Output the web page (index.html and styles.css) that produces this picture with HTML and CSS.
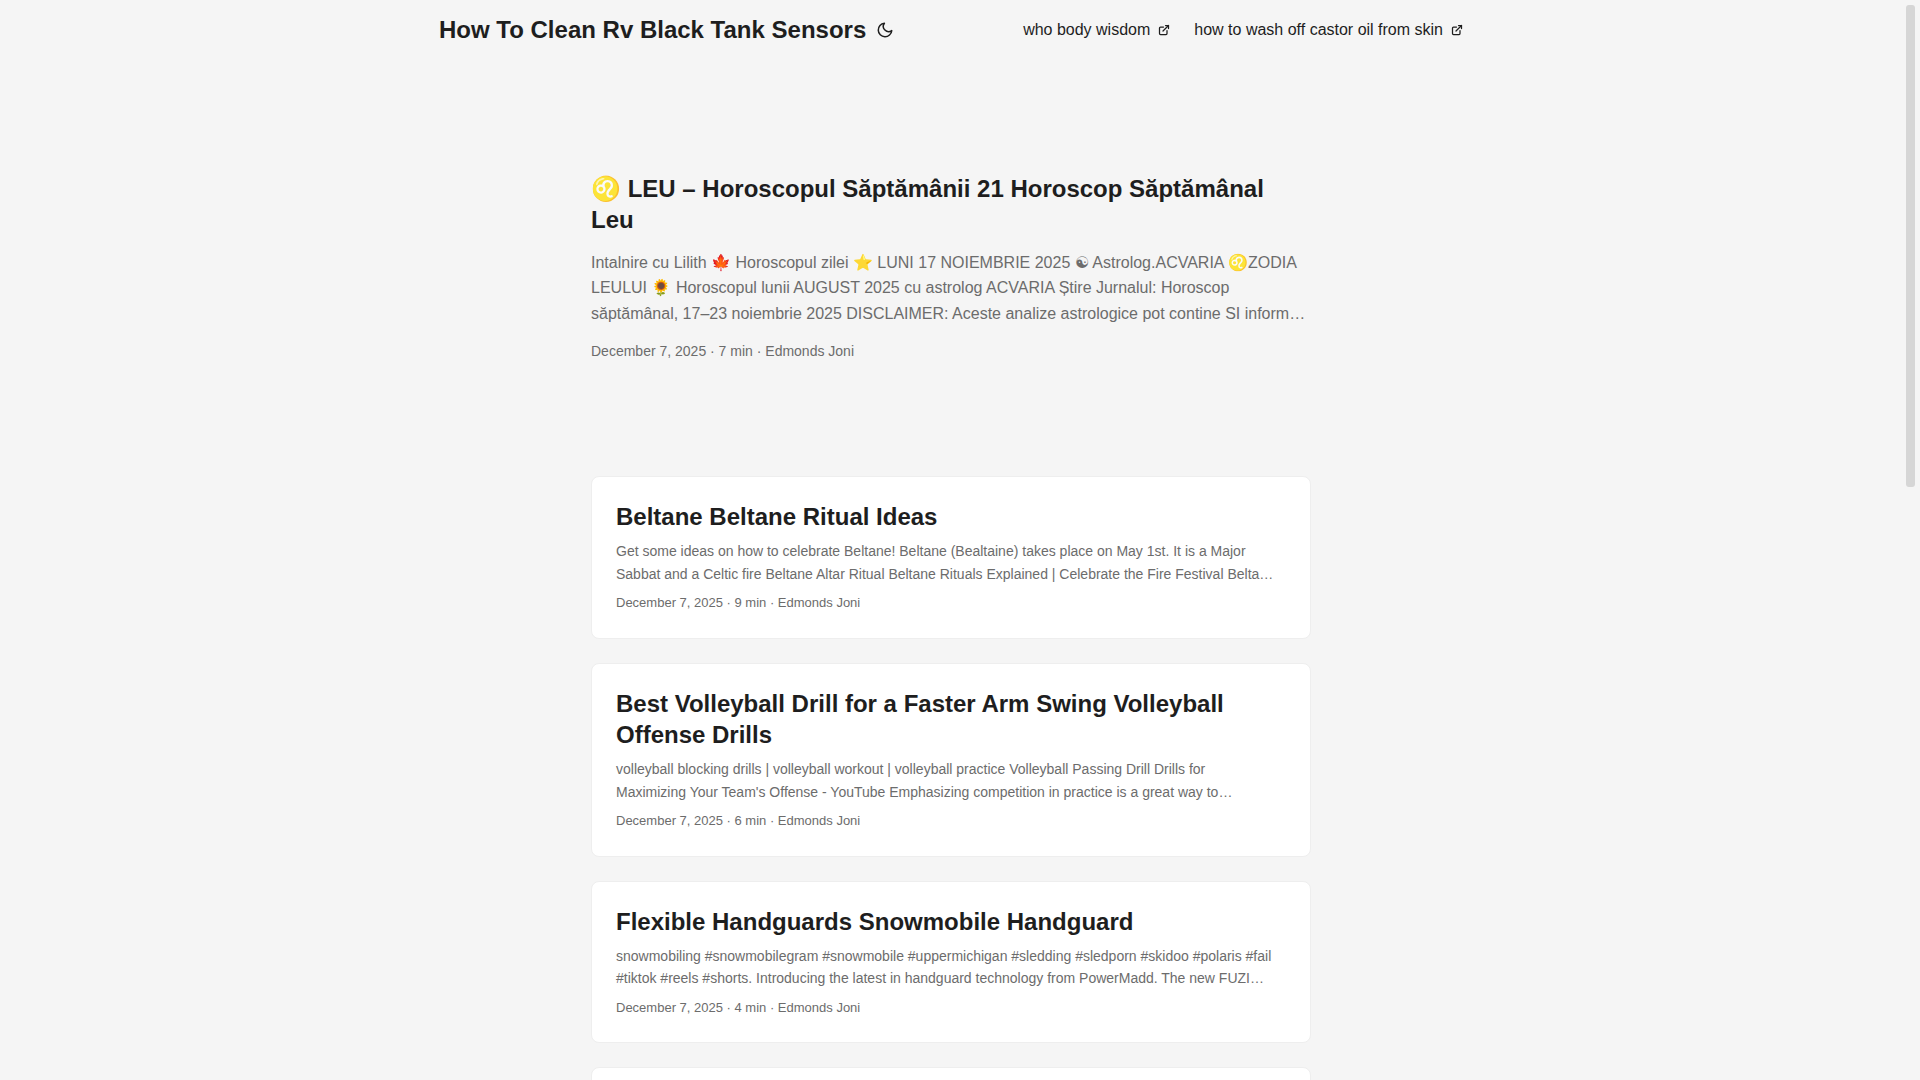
FILE: index.html
```html
<!DOCTYPE html>
<html lang="en">
<head>
  <meta charset="UTF-8" />
  <meta name="viewport" content="width=device-width, initial-scale=1" />
  <title>How To Clean Rv Black Tank Sensors</title>
  <link rel="stylesheet" href="styles.css">
</head>
<body>
  <div class="page">
    <header class="header">
      <nav class="nav">
        <div class="logo">
          <a href="#">How To Clean Rv Black Tank Sensors</a>
          <button class="theme-toggle" type="button" aria-label="Toggle theme">
            <svg width="18" height="18" viewBox="0 0 24 24" fill="none" stroke="currentColor" stroke-width="2" stroke-linecap="round" stroke-linejoin="round">
              <path d="M21 12.79A9 9 0 1 1 11.21 3 7 7 0 0 0 21 12.79z"></path>
            </svg>
          </button>
        </div>
        <ul class="menu">
          <li>
            <a href="#">who body wisdom
              <svg width="12" height="12" viewBox="0 0 24 24" fill="none" stroke="currentColor" stroke-width="2.5" stroke-linecap="round" stroke-linejoin="round">
                <path d="M18 13v6a2 2 0 0 1-2 2H5a2 2 0 0 1-2-2V8a2 2 0 0 1 2-2h6"></path>
                <path d="M15 3h6v6"></path>
                <path d="M10 14L21 3"></path>
              </svg>
            </a>
          </li>
          <li>
            <a href="#">how to wash off castor oil from skin
              <svg width="12" height="12" viewBox="0 0 24 24" fill="none" stroke="currentColor" stroke-width="2.5" stroke-linecap="round" stroke-linejoin="round">
                <path d="M18 13v6a2 2 0 0 1-2 2H5a2 2 0 0 1-2-2V8a2 2 0 0 1 2-2h6"></path>
                <path d="M15 3h6v6"></path>
                <path d="M10 14L21 3"></path>
              </svg>
            </a>
          </li>
        </ul>
      </nav>
    </header>

    <main class="main">
      <article class="first-entry">
        <h2><a href="#">♌ LEU – Horoscopul Săptămânii 21 Horoscop Săptămânal Leu</a></h2>
        <p class="entry-content">Intalnire cu Lilith 🍁 Horoscopul zilei ⭐ LUNI 17 NOIEMBRIE 2025 ☯ Astrolog.ACVARIA ♌ZODIA LEULUI 🌻 Horoscopul lunii AUGUST 2025 cu astrolog ACVARIA Știre Jurnalul: Horoscop săptămânal, 17–23 noiembrie 2025 DISCLAIMER: Aceste analize astrologice pot contine SI inform…</p>
        <footer class="entry-footer">December 7, 2025 · 7 min · Edmonds Joni</footer>
      </article>

      <article class="post-entry">
        <h2><a href="#">Beltane Beltane Ritual Ideas</a></h2>
        <p class="entry-content">Get some ideas on how to celebrate Beltane! Beltane (Bealtaine) takes place on May 1st. It is a Major<br>Sabbat and a Celtic fire Beltane Altar Ritual Beltane Rituals Explained | Celebrate the Fire Festival Belta…</p>
        <footer class="entry-footer">December 7, 2025 · 9 min · Edmonds Joni</footer>
      </article>

      <article class="post-entry">
        <h2><a href="#">Best Volleyball Drill for a Faster Arm Swing Volleyball Offense Drills</a></h2>
        <p class="entry-content">volleyball blocking drills | volleyball workout | volleyball practice Volleyball Passing Drill Drills for<br>Maximizing Your Team's Offense - YouTube Emphasizing competition in practice is a great way to…</p>
        <footer class="entry-footer">December 7, 2025 · 6 min · Edmonds Joni</footer>
      </article>

      <article class="post-entry">
        <h2><a href="#">Flexible Handguards Snowmobile Handguard</a></h2>
        <p class="entry-content">snowmobiling #snowmobilegram #snowmobile #uppermichigan #sledding #sledporn #skidoo #polaris #fail<br>#tiktok #reels #shorts. Introducing the latest in handguard technology from PowerMadd. The new FUZI…</p>
        <footer class="entry-footer">December 7, 2025 · 4 min · Edmonds Joni</footer>
      </article>

      <article class="post-entry"></article>
    </main>
  </div>

  <div class="scrollbar">
    <div class="scrollbar-thumb"></div>
  </div>
</body>
</html>
```
FILE: styles.css
```css
* {
  box-sizing: border-box;
  margin: 0;
  padding: 0;
}

body {
  display: flex;
  height: 100vh;
  overflow: hidden;
  font-family: "Liberation Sans", Arial, sans-serif;
  font-size: 18px;
  line-height: 1.6;
  color: #1e1e1e;
  background: #f5f5f5;
}

a {
  color: inherit;
  text-decoration: none;
}

ul {
  list-style: none;
}

.page {
  flex: 1;
}

.nav {
  display: flex;
  justify-content: space-between;
  max-width: 1072px;
  margin: 0 auto;
  padding: 0 24px;
  line-height: 60px;
}

.logo {
  display: flex;
  align-items: center;
  font-size: 24px;
  font-weight: 700;
}

.theme-toggle {
  display: flex;
  margin: 0 8px;
  padding: 2px;
  border: 0;
  background: none;
  color: inherit;
  cursor: pointer;
}

.menu {
  display: flex;
  gap: 24px;
  font-size: 16px;
}

.menu a {
  display: flex;
  align-items: center;
  gap: 8px;
}

.main {
  max-width: 768px;
  margin: 0 auto;
  padding: 24px;
}

h2 {
  font-size: 24px;
  line-height: 1.3;
}

.entry-content {
  margin: 8px 0;
  font-size: 14px;
  color: #6c6c6c;
}

.entry-footer {
  font-size: 13px;
  color: #6c6c6c;
}

.first-entry {
  display: flex;
  flex-direction: column;
  justify-content: center;
  min-height: 320px;
  margin: 24px 0 48px;
}

.first-entry .entry-content {
  margin: 14px 0;
  font-size: 16px;
}

.first-entry .entry-footer {
  font-size: 14px;
}

.post-entry {
  margin-bottom: 24px;
  padding: 24px;
  border: 1px solid #eee;
  border-radius: 8px;
  background: #fff;
}

.scrollbar {
  width: 18px;
  padding: 5px 5px 5px 4px;
}

.scrollbar-thumb {
  height: 482px;
  border-radius: 3px;
  background: #d6d6d6;
}
```
